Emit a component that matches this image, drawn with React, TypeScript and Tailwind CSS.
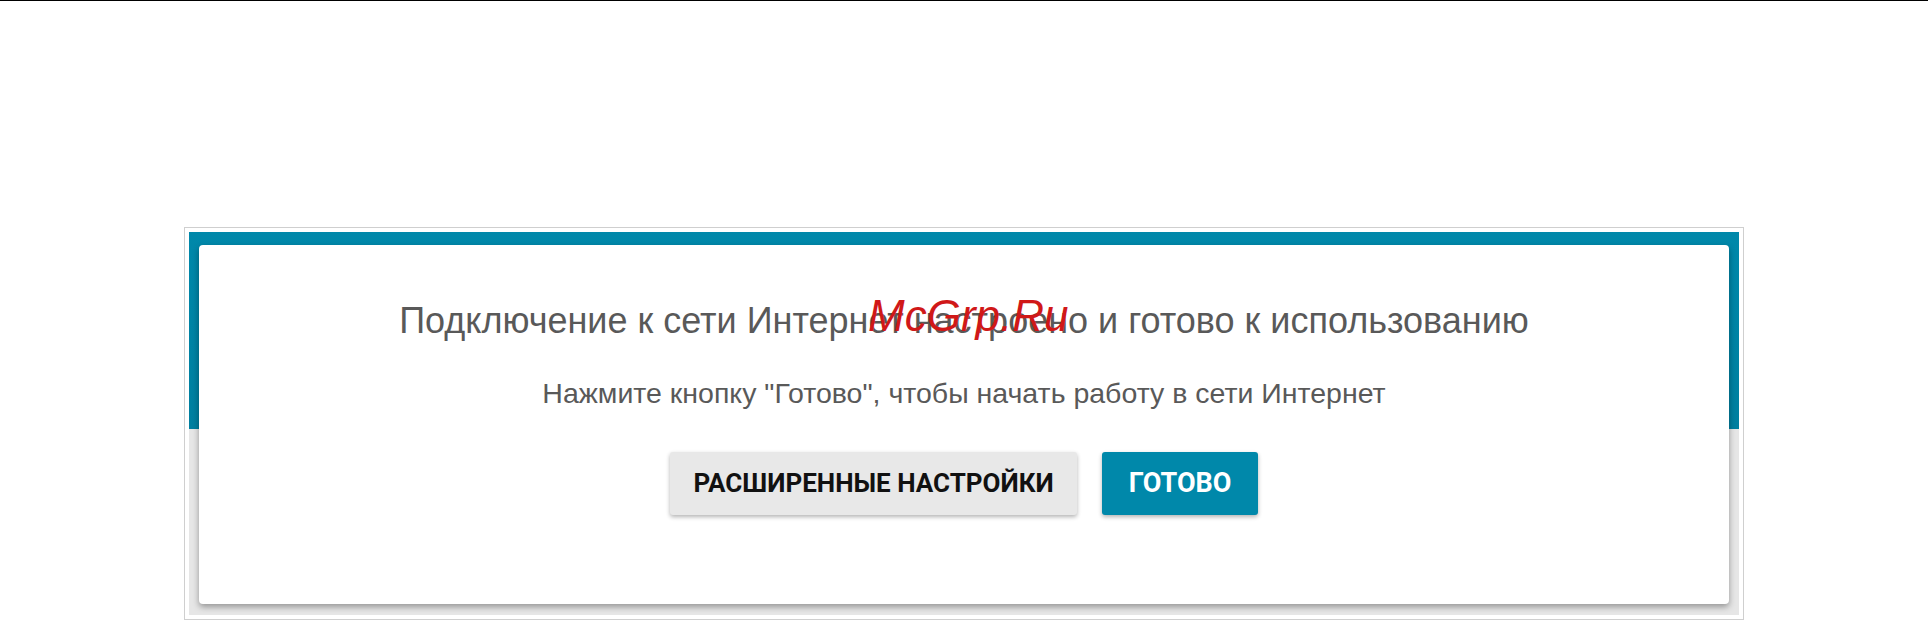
export default function App() {
  return (
    <div className="min-h-[622px] bg-white font-['Liberation_Sans',Arial,sans-serif]">
      <div className="h-px bg-black" />
      <div className="mx-auto mt-[226px] w-[1560px] border border-[#cfcfcf] p-1">
        <div className="relative bg-[linear-gradient(to_bottom,#0088aa_0,#007f9f_197px,#e6e6e6_197px,#e6e6e6_100%)] px-[10px] pb-[11px] pt-[13px]">
          <div className="flex flex-col items-center rounded-[4px] bg-white pb-[89px] pt-[56px] shadow-[0_3px_6px_rgba(0,0,0,0.35)]">
            <h1 className="text-[36px] leading-[40px] text-[#595959]">
              Подключение к сети Интернет настроено и готово к использованию
            </h1>
            <p className="mt-[36px] text-[28.5px] leading-[32px] text-[#595959]">
              Нажмите кнопку "Готово", чтобы начать работу в сети Интернет
            </p>
            <div className="mt-[43px] flex gap-[25px] font-['Roboto','Liberation_Sans',sans-serif]">
              <button className="h-[63px] w-[407px] rounded-[3px] bg-[#e8e8e8] text-[26px] font-bold uppercase text-[#111] shadow-[0_2px_4px_rgba(0,0,0,0.3)]">
                Расширенные настройки
              </button>
              <button className="h-[63px] w-[156px] rounded-[3px] bg-[#0088aa] text-[27px] font-bold uppercase text-white shadow-[0_2px_4px_rgba(0,0,0,0.3)]">
                Готово
              </button>
            </div>
          </div>
          <span className="absolute left-[679px] top-[62px] text-[44px] italic leading-none text-[#d01818]">
            McGrp.Ru
          </span>
        </div>
      </div>
    </div>
  )
}
